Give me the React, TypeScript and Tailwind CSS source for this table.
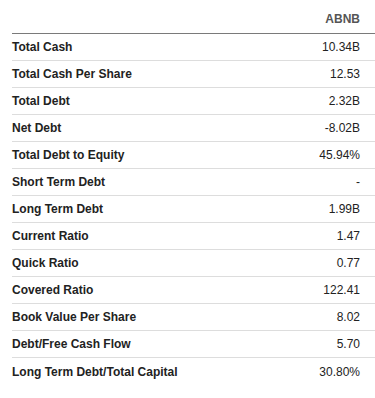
export default function App() {
    const rows: [string, string][] = [
        ['Total Cash', '10.34B'],
        ['Total Cash Per Share', '12.53'],
        ['Total Debt', '2.32B'],
        ['Net Debt', '-8.02B'],
        ['Total Debt to Equity', '45.94%'],
        ['Short Term Debt', '-'],
        ['Long Term Debt', '1.99B'],
        ['Current Ratio', '1.47'],
        ['Quick Ratio', '0.77'],
        ['Covered Ratio', '122.41'],
        ['Book Value Per Share', '8.02'],
        ['Debt/Free Cash Flow', '5.70'],
        ['Long Term Debt/Total Capital', '30.80%'],
    ];

    return (
        <div className="w-[375px] h-[398px] bg-white pl-[12px] font-['Liberation_Sans',Arial,sans-serif] text-[12px] leading-[14px]">
            {/* Header */}
            <div className="h-[34px] flex items-end justify-end pb-[7px] pr-[15px] border-b border-[#7a7a7a]">
                <span className="font-bold text-[#555555]">ABNB</span>
            </div>

            {/* Rows */}
            {rows.map(([label, value], i) => (
                <div
                    key={label}
                    className={`h-[27px] flex items-center justify-between pr-[15px] ${i < rows.length - 1 ? 'border-b border-[#dddddd]' : ''}`}
                >
                    <span className="font-bold text-[#222222]">{label}</span>
                    <span className="text-[#222222]">{value}</span>
                </div>
            ))}
        </div>
    );
}
